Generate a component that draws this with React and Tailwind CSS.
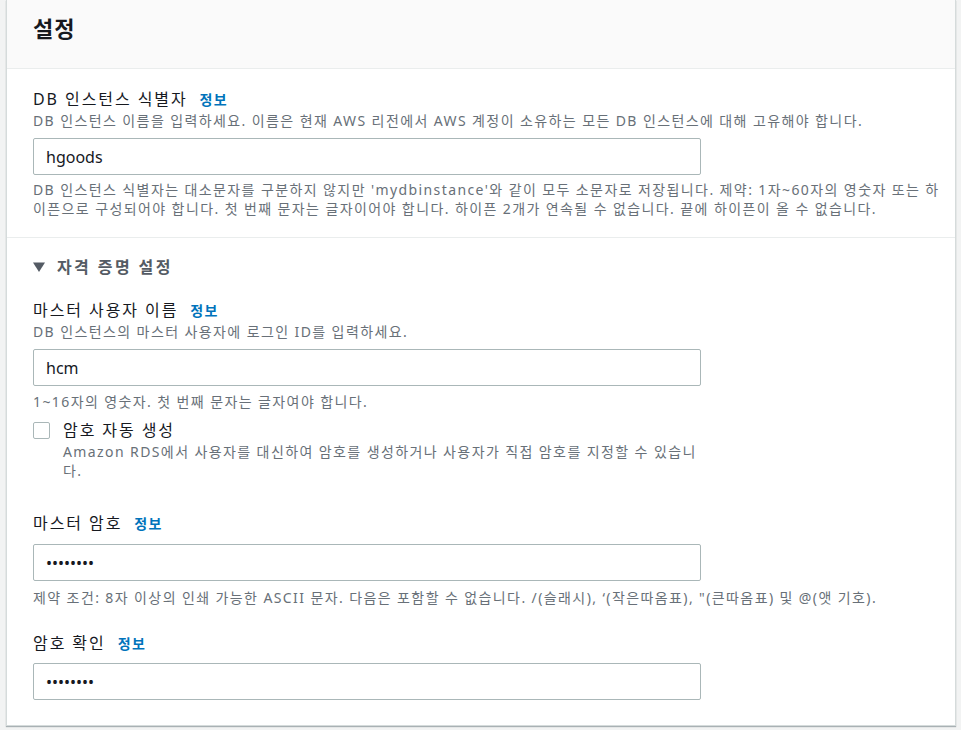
import { useState } from 'react';

const font = { fontFamily: '"Noto Sans", "Noto Sans CJK KR", sans-serif' };

function Info() {
    return <span className="ml-[12px] text-[14px] font-bold tracking-[0.1em] text-[#0073bb]">정보</span>;
}

function Label({ children }) {
    return (
        <div className="text-[16px] leading-[22px] tracking-[0.12em] text-[#16191f]">
            {children}
            <Info />
        </div>
    );
}

function Desc({ children, className = '' }) {
    return <div className={`text-[14px] leading-[19px] tracking-[0.1em] text-[#687078] ${className}`}>{children}</div>;
}

function TextInput({ value, type = 'text', className = '' }) {
    return (
        <input
            type={type}
            defaultValue={value}
            readOnly
            className={`block h-[37px] w-[668px] rounded-[2px] border border-[#aab7b8] bg-white px-[12px] text-[16px] text-[#16191f] outline-none ${className}`}
            style={font}
        />
    );
}

export default function App() {
    const [auto, setAuto] = useState(false);

    return (
        <div className="min-h-[730px] bg-[#f2f3f3] pl-[6px] pr-[5px]" style={font} lang="ko">
            <div className="border border-t-0 border-[#d5dbdb] bg-white shadow-[0_1px_1px_0_rgba(0,28,36,0.3)]">
                {/* Header */}
                <div className="flex h-[69px] items-center border-b border-[#eaeded] bg-[#fafafa] px-[26px] pb-[12px]">
                    <h2 className="text-[22px] font-bold tracking-[0.05em] text-[#16191f]">설정</h2>
                </div>

                {/* DB 인스턴스 식별자 */}
                <div className="border-b border-[#eaeded] pl-[26px] pr-[12px] pt-[19px] pb-[19px]">
                    <Label>DB 인스턴스 식별자</Label>
                    <Desc>DB 인스턴스 이름을 입력하세요. 이름은 현재 AWS 리전에서 AWS 계정이 소유하는 모든 DB 인스턴스에 대해 고유해야 합니다.</Desc>
                    <TextInput value="hgoods" className="mt-[8px]" />
                    <Desc className="mt-[5px]">
                        DB 인스턴스 식별자는 대소문자를 구분하지 않지만 'mydbinstance'와 같이 모두 소문자로 저장됩니다. 제약: 1자~60자의 영숫자 또는 하이픈으로 구성되어야 합니다. 첫 번째 문자는 글자이어야 합니다. 하이픈 2개가 연속될 수 없습니다. 끝에 하이픈이 올 수 없습니다.
                    </Desc>
                </div>

                {/* 자격 증명 설정 */}
                <div className="pl-[26px] pr-[20px] pt-[18px] pb-[25px]">
                    <div className="flex items-center text-[16px] font-bold leading-[22px] tracking-[0.15em] text-[#545b64]">
                        <svg width="12" height="10" viewBox="0 0 12 10" className="mr-[12px]">
                            <path d="M0 0.5 L12 0.5 L6 10 Z" fill="#545b64" />
                        </svg>
                        자격 증명 설정
                    </div>

                    <div className="mt-[21px]">
                        <Label>마스터 사용자 이름</Label>
                        <Desc>DB 인스턴스의 마스터 사용자에 로그인 ID를 입력하세요.</Desc>
                        <TextInput value="hcm" className="mt-[8px]" />
                        <Desc className="mt-[6px]">1~16자의 영숫자. 첫 번째 문자는 글자여야 합니다.</Desc>
                    </div>

                    <div className="mt-[8px] flex items-start">
                        <button
                            onClick={() => setAuto(!auto)}
                            className={`mt-[3px] h-[17px] w-[17px] shrink-0 rounded-[2px] border border-[#aab7b8] ${auto ? 'bg-[#0073bb]' : 'bg-white'}`}
                        />
                        <div className="ml-[13px] w-[640px]">
                            <div className="text-[16px] leading-[22px] tracking-[0.12em] text-[#16191f]">암호 자동 생성</div>
                            <Desc className="mt-[1px]">
                                Amazon RDS에서 사용자를 대신하여 암호를 생성하거나 사용자가 직접 암호를 지정할 수 있습니다.
                            </Desc>
                        </div>
                    </div>

                    <div className="mt-[32px]">
                        <Label>마스터 암호</Label>
                        <TextInput value="password" type="password" className="mt-[9px]" />
                        <Desc className="mt-[7px]">
                            제약 조건: 8자 이상의 인쇄 가능한 ASCII 문자. 다음은 포함할 수 없습니다. /(슬래시), ‘(작은따옴표), "(큰따옴표) 및 @(앳 기호).
                        </Desc>
                    </div>

                    <div className="mt-[25px]">
                        <Label>암호 확인</Label>
                        <TextInput value="password" type="password" className="mt-[8px]" />
                    </div>
                </div>
            </div>
        </div>
    );
}
